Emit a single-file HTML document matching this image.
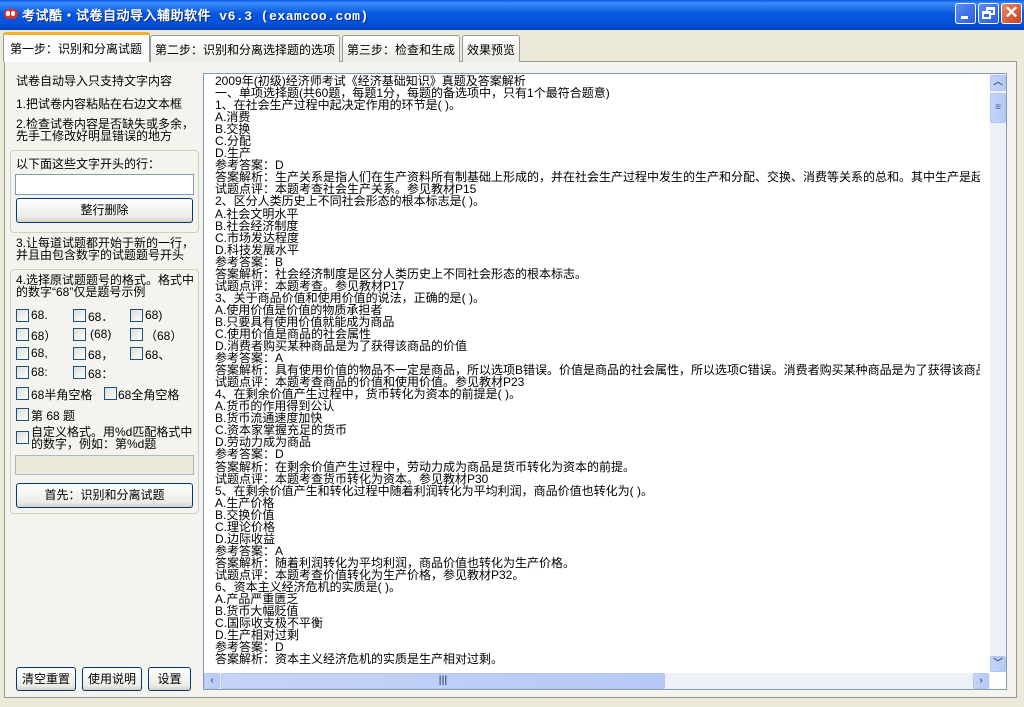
<!DOCTYPE html>
<html><head><meta charset="utf-8"><style>
*{margin:0;padding:0;box-sizing:border-box}
body{width:1024px;height:707px;background:#ece9d8;position:relative;overflow:hidden;font-family:"Liberation Sans","WenQuanYi Zen Hei","Noto Sans CJK SC",sans-serif;font-size:12px;color:#000}
.a{position:absolute}
.title{left:0;top:0;width:1024px;height:30px;background:linear-gradient(#0a5ee8 0%,#3c8cf8 10%,#0758e0 45%,#0450d8 85%,#0340b0 100%)}
.tt{left:22px;top:5px;color:#fff;font-weight:bold;font-size:13px;letter-spacing:0.5px;text-shadow:1px 1px #0a2a80;font-family:"Liberation Mono","WenQuanYi Zen Hei",monospace}
.wb{top:3px;width:21px;height:21px;border:1px solid #fff;border-radius:3px;background:linear-gradient(135deg,#5a8cf0,#2a5ce0)}
.tab{top:35px;height:27px;border:1px solid #919b9c;border-bottom:none;border-radius:3px 3px 0 0;background:linear-gradient(#fff,#ecebe6);padding:5px 4px 0;white-space:nowrap;font-size:12px}
.panel{left:4px;top:61px;width:1013px;height:637px;border:1px solid #919b9c;background:#f4f3ee}
.grp{border:1px solid #d0d0bf;border-radius:4px}
.btn{border:1px solid #003c74;border-radius:3px;background:linear-gradient(#fff,#ecebe6 80%,#d6d0c5);text-align:center;font-size:12px}
.inp{border:1px solid #7f9db9;background:#fff}
.cb{width:13px;height:13px;border:1px solid #1c5180;background:linear-gradient(135deg,#dcdcd7,#fff)}
.ta{left:203px;top:73px;width:804px;height:617px;border:1px solid #7f9db9;background:#fff}
.txt{left:215px;top:75px;width:765px;height:597px;overflow:hidden;white-space:nowrap;line-height:12.05px;font-size:12px}
.sb{background:#eef0f8}
.sbtn{border:1px solid #b3c6ef;border-radius:2px;background:linear-gradient(90deg,#c6d3f7,#b6c9f5);color:#4d6185;font-size:10px;font-weight:bold;text-align:center}
</style></head><body>
<div class="a title"></div>
<div class="a" style="left:4px;top:9px;width:14px;height:10px;background:#e03020;border-radius:5px"></div>
<div class="a" style="left:6px;top:11px;width:4px;height:5px;background:#fff;border-radius:2px"></div>
<div class="a" style="left:11px;top:11px;width:4px;height:5px;background:#fff;border-radius:2px"></div>
<div class="a tt">考试酷・试卷自动导入辅助软件 v6.3 (examcoo.com)</div>
<div class="a wb" style="left:955px"><div class="a" style="left:5px;top:12px;width:7px;height:3px;background:#fff"></div></div>
<div class="a wb" style="left:978px"><div class="a" style="left:7px;top:3px;width:9px;height:8px;border:2px solid #fff;border-top-width:3px"></div><div class="a" style="left:3px;top:7px;width:9px;height:8px;border:2px solid #fff;border-top-width:3px;background:#3a6ce6"></div></div>
<div class="a wb" style="left:1001px;background:linear-gradient(135deg,#e88a6a,#c8401c);color:#fff;font-size:17px;line-height:18px;text-align:center;font-weight:bold">✕</div>

<div class="a panel"></div>
<div class="a tab" style="left:150px;width:190px">第二步：识别和分离选择题的选项</div>
<div class="a tab" style="left:342px;width:118px">第三步：检查和生成</div>
<div class="a tab" style="left:462px;width:58px">效果预览</div>
<div class="a tab" style="left:3px;top:32px;width:147px;height:30px;background:#fcfcfe;border-top:3px solid #f5b030;padding-top:5px;padding-left:6px">第一步：识别和分离试题</div>

<div class="a" style="left:16px;top:72px">试卷自动导入只支持文字内容</div>
<div class="a" style="left:16px;top:95px">1.把试卷内容粘贴在右边文本框</div>
<div class="a" style="left:16px;top:118px;line-height:12px">2.检查试卷内容是否缺失或多余，<br>先手工修改好明显错误的地方</div>
<div class="a grp" style="left:10px;top:150px;width:189px;height:83px"></div>
<div class="a" style="left:16px;top:155px">以下面这些文字开头的行：</div>
<div class="a inp" style="left:15px;top:174px;width:179px;height:21px"></div>
<div class="a btn" style="left:16px;top:198px;width:177px;height:25px;line-height:23px">整行删除</div>
<div class="a" style="left:16px;top:237px;line-height:12px">3.让每道试题都开始于新的一行，<br>并且由包含数字的试题题号开头</div>
<div class="a grp" style="left:10px;top:269px;width:189px;height:245px"></div>
<div class="a" style="left:16px;top:274px;line-height:12px">4.选择原试题题号的格式。格式中<br>的数字“68”仅是题号示例</div>
<div class="a cb" style="left:16px;top:309px"></div><div class="a" style="left:31px;top:308px">68.</div>
<div class="a cb" style="left:73px;top:309px"></div><div class="a" style="left:88px;top:308px">68．</div>
<div class="a cb" style="left:130px;top:309px"></div><div class="a" style="left:145px;top:308px">68)</div>
<div class="a cb" style="left:16px;top:328px"></div><div class="a" style="left:31px;top:327px">68）</div>
<div class="a cb" style="left:73px;top:328px"></div><div class="a" style="left:90px;top:327px">(68)</div>
<div class="a cb" style="left:130px;top:328px"></div><div class="a" style="left:145px;top:327px">（68）</div>
<div class="a cb" style="left:16px;top:347px"></div><div class="a" style="left:31px;top:346px">68,</div>
<div class="a cb" style="left:73px;top:347px"></div><div class="a" style="left:88px;top:346px">68，</div>
<div class="a cb" style="left:130px;top:347px"></div><div class="a" style="left:145px;top:346px">68、</div>
<div class="a cb" style="left:16px;top:366px"></div><div class="a" style="left:31px;top:365px">68:</div>
<div class="a cb" style="left:73px;top:366px"></div><div class="a" style="left:88px;top:365px">68：</div>
<div class="a cb" style="left:16px;top:387px"></div><div class="a" style="left:31px;top:386px">68半角空格</div>
<div class="a cb" style="left:104px;top:387px"></div><div class="a" style="left:118px;top:386px">68全角空格</div>
<div class="a cb" style="left:16px;top:408px"></div><div class="a" style="left:31px;top:407px">第 68 题</div>
<div class="a cb" style="left:16px;top:431px"></div><div class="a" style="left:31px;top:426px;line-height:12px">自定义格式。用%d匹配格式中<br>的数字，例如：第%d题</div>
<div class="a inp" style="left:15px;top:455px;width:179px;height:20px;background:#ece9d8;border-color:#a8b8c8"></div>
<div class="a btn" style="left:16px;top:483px;width:177px;height:25px;line-height:23px">首先：识别和分离试题</div>
<div class="a btn" style="left:16px;top:667px;width:60px;height:24px;line-height:22px">清空重置</div>
<div class="a btn" style="left:82px;top:667px;width:60px;height:24px;line-height:22px">使用说明</div>
<div class="a btn" style="left:148px;top:667px;width:43px;height:24px;line-height:22px">设置</div>

<div class="a ta"></div>
<div class="a txt">2009年(初级)经济师考试《经济基础知识》真题及答案解析<br>一、单项选择题(共60题，每题1分，每题的备选项中，只有1个最符合题意)<br>1、在社会生产过程中起决定作用的环节是( )。<br>A.消费<br>B.交换<br>C.分配<br>D.生产<br>参考答案：D<br>答案解析：生产关系是指人们在生产资料所有制基础上形成的，并在社会生产过程中发生的生产和分配、交换、消费等关系的总和。其中生产是起决定作用的环节<br>试题点评：本题考查社会生产关系。参见教材P15<br>2、区分人类历史上不同社会形态的根本标志是( )。<br>A.社会文明水平<br>B.社会经济制度<br>C.市场发达程度<br>D.科技发展水平<br>参考答案：B<br>答案解析：社会经济制度是区分人类历史上不同社会形态的根本标志。<br>试题点评：本题考查。参见教材P17<br>3、关于商品价值和使用价值的说法，正确的是( )。<br>A.使用价值是价值的物质承担者<br>B.只要具有使用价值就能成为商品<br>C.使用价值是商品的社会属性<br>D.消费者购买某种商品是为了获得该商品的价值<br>参考答案：A<br>答案解析：具有使用价值的物品不一定是商品，所以选项B错误。价值是商品的社会属性，所以选项C错误。消费者购买某种商品是为了获得该商品的使用价值<br>试题点评：本题考查商品的价值和使用价值。参见教材P23<br>4、在剩余价值产生过程中，货币转化为资本的前提是( )。<br>A.货币的作用得到公认<br>B.货币流通速度加快<br>C.资本家掌握充足的货币<br>D.劳动力成为商品<br>参考答案：D<br>答案解析：在剩余价值产生过程中，劳动力成为商品是货币转化为资本的前提。<br>试题点评：本题考查货币转化为资本。参见教材P30<br>5、在剩余价值产生和转化过程中随着利润转化为平均利润，商品价值也转化为( )。<br>A.生产价格<br>B.交换价值<br>C.理论价格<br>D.边际收益<br>参考答案：A<br>答案解析：随着利润转化为平均利润，商品价值也转化为生产价格。<br>试题点评：本题考查价值转化为生产价格，参见教材P32。<br>6、资本主义经济危机的实质是( )。<br>A.产品严重匮乏<br>B.货币大幅贬值<br>C.国际收支极不平衡<br>D.生产相对过剩<br>参考答案：D<br>答案解析：资本主义经济危机的实质是生产相对过剩。</div>
<div class="a sb" style="left:990px;top:74px;width:16px;height:598px"></div>
<div class="a sbtn" style="left:990px;top:75px;width:16px;height:16px;line-height:14px">︿</div>
<div class="a sbtn" style="left:990px;top:93px;width:16px;height:30px;line-height:28px">≡</div>
<div class="a sbtn" style="left:990px;top:656px;width:16px;height:16px;line-height:14px">﹀</div>
<div class="a sb" style="left:204px;top:673px;width:786px;height:16px"></div>
<div class="a sbtn" style="left:204px;top:673px;width:16px;height:16px;line-height:14px">‹</div>
<div class="a sbtn" style="left:221px;top:673px;width:444px;height:16px;line-height:14px">|||</div>
<div class="a sbtn" style="left:973px;top:673px;width:16px;height:16px;line-height:14px">›</div>
</body></html>
